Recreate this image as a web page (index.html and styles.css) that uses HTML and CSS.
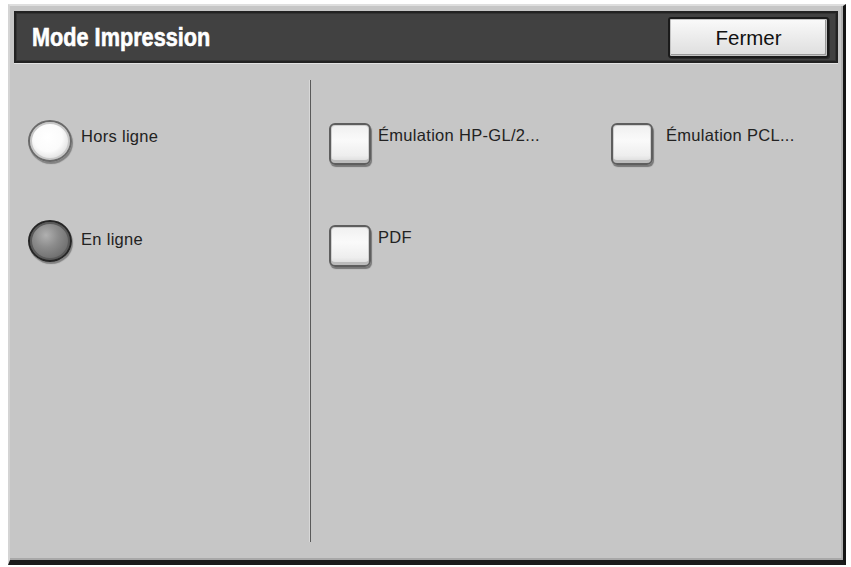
FILE: index.html
```html
<!DOCTYPE html>
<html lang="fr">
<head>
<meta charset="utf-8">
<title>Mode Impression</title>
<link rel="stylesheet" href="styles.css">
</head>
<body>
<div class="panel">
  <div class="titlebar">
    <h1 class="title">Mode Impression</h1>
    <button class="close-btn">Fermer</button>
  </div>
  <div class="content">
    <div class="left-col">
      <div class="option">
        <span class="radio radio-off"></span>
        <span class="label">Hors ligne</span>
      </div>
      <div class="option">
        <span class="radio radio-on"></span>
        <span class="label">En ligne</span>
      </div>
    </div>
    <div class="right-col">
      <div class="option">
        <span class="check"></span>
        <span class="label">Émulation HP-GL/2...</span>
      </div>
      <div class="option option-wide">
        <span class="check"></span>
        <span class="label">Émulation PCL...</span>
      </div>
      <div class="option">
        <span class="check"></span>
        <span class="label">PDF</span>
      </div>
    </div>
  </div>
</div>
</body>
</html>
```
FILE: styles.css
```css
html, body {
  margin: 0;
  padding: 0;
  background: #ffffff;
}

body {
  width: 851px;
  height: 567px;
  overflow: hidden;
  font-family: "Liberation Sans", Arial, sans-serif;
  color: #222222;
}

.panel {
  box-sizing: border-box;
  margin: 4px 0 0 8px;
  width: 838px;
  height: 561px;
  background: #c6c6c6;
  border-top: 2px solid #dedede;
  border-left: 2px solid #d4d4d4;
  border-right: 3px solid #151515;
  border-bottom: 5px solid #1c1c1c;
  box-shadow: inset 0 -2px 0 #a8a8a8, inset -2px 0 0 #b0b0b0;
  display: flex;
  flex-direction: column;
}

.titlebar {
  box-sizing: border-box;
  margin: 5px 5px 0 4px;
  height: 52px;
  background: #414141;
  border: 2px solid #222222;
  box-shadow: 0 1px 0 #e2e2e2, inset 0 0 0 1px #333;
  display: flex;
  align-items: center;
  justify-content: space-between;
  padding: 0 7px 0 16px;
}

.title {
  margin: 0;
  font-family: "Liberation Sans", Arial, sans-serif;
  font-weight: bold;
  font-size: 25.5px;
  color: #ffffff;
  line-height: 1;
  margin-top: 1px;
  transform: scaleX(0.85);
  transform-origin: left center;
  -webkit-text-stroke: 0.6px #ffffff;
}

.close-btn {
  box-sizing: border-box;
  width: 161px;
  height: 41px;
  margin-top: 1px;
  background: linear-gradient(#fafafa, #ededed 45%, #dedede);
  border: 2px solid #1a1a1a;
  border-radius: 3px;
  box-shadow: inset 0 0 0 1px #c4c4c4, inset -2px -2px 0 #9a9a9a, 1px 1px 0 #2a2a2a;
  font-family: "Liberation Sans", Arial, sans-serif;
  font-size: 20.5px;
  color: #111;
  padding: 0;
  padding-top: 1px;
}

.content {
  flex: 1;
  display: flex;
}

.left-col {
  width: 300px;
  padding: 57px 0 0 18px;
  box-sizing: border-box;
  display: flex;
  flex-direction: column;
  gap: 58px;
}

.right-col {
  flex: 1;
  margin: 17px 0 18px 0;
  border-left: 1px solid #5a5a5a;
  box-shadow: -1px 0 0 #d8d8d8;
  padding: 43px 0 0 18px;
  display: grid;
  grid-template-columns: 282px 1fr;
  grid-auto-rows: 102px;
  align-content: start;
}

.option {
  display: flex;
  align-items: flex-start;
}

.label {
  font-size: 16.5px;
  line-height: 20px;
  letter-spacing: 0.3px;
}

.radio {
  box-sizing: border-box;
  flex: none;
  width: 44px;
  height: 42px;
  border-radius: 50%;
  margin-right: 9px;
}

.left-col .label {
  padding-top: 6px;
}

.left-col .option:last-child .label {
  padding-top: 9px;
}

.radio-off {
  border: 2px solid #6a6a6a;
  background: radial-gradient(circle at 45% 40%, #ffffff 0%, #fbfbfb 45%, #dedede 75%, #b4b4b4 100%);
  box-shadow: 1px 2px 1px rgba(0, 0, 0, 0.35), inset 0 0 0 2px #c8c8c8;
}

.radio-on {
  border: 2px solid #262626;
  background: radial-gradient(circle at 40% 35%, #b0b0b0 0%, #8c8c8c 35%, #6c6c6c 75%, #4a4a4a 100%);
  box-shadow: 1px 2px 1px rgba(0, 0, 0, 0.35), inset 0 0 0 2px #5a5a5a;
}

.check {
  box-sizing: border-box;
  flex: none;
  width: 42px;
  height: 42px;
  border: 2px solid #5e5e5e;
  border-radius: 6px;
  background: linear-gradient(#f0f0f0, #fafafa 40%, #eeeeee 80%, #d8d8d8);
  box-shadow: 1px 2px 1px rgba(0, 0, 0, 0.4), inset 0 -3px 0 #bcbcbc, inset 0 0 0 1px #d0d0d0;
  margin-right: 7px;
}

.option-wide .check {
  margin-right: 13px;
}

.right-col .label {
  padding-top: 2px;
}
```
